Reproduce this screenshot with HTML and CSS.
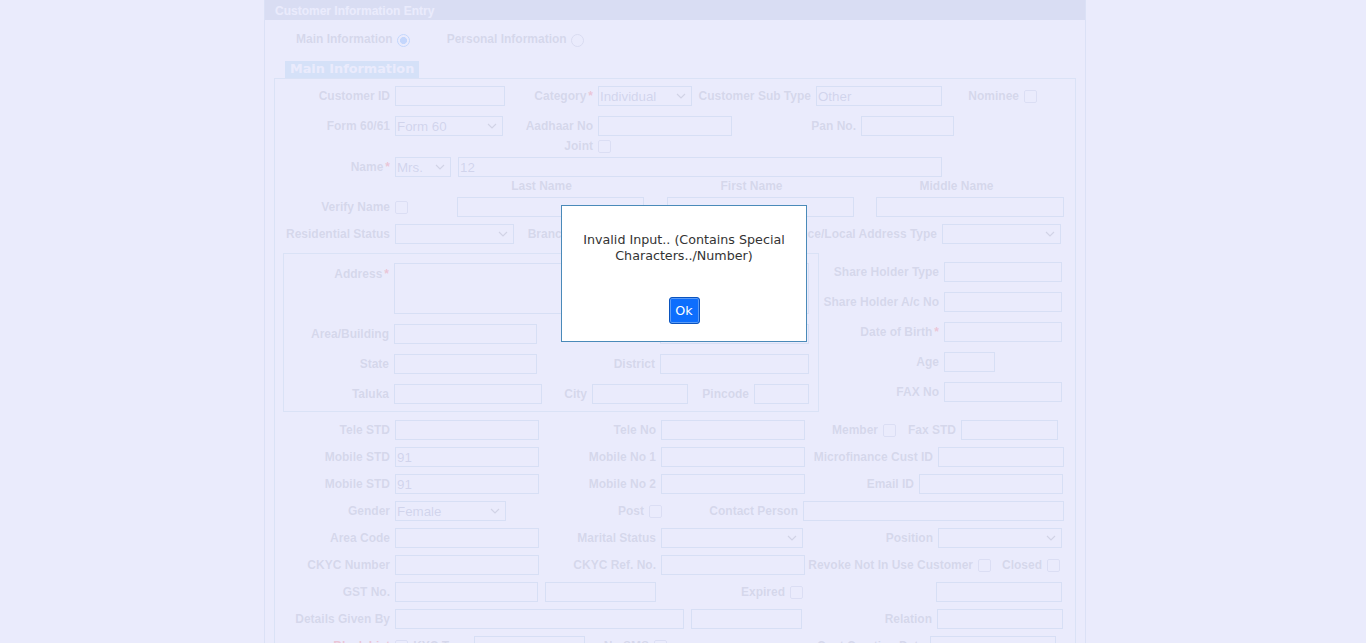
FILE: index.html
```html
<!DOCTYPE html>
<html lang="en">
<head>
<meta charset="utf-8">
<title>Customer Information Entry</title>
<link rel="stylesheet" href="styles.css">
</head>
<body>
<div class="page">
  <div class="titlebar">Customer Information Entry</div>
  <div class="tabs">
    <span class="tab">Main Information</span><span class="radio on"></span>
    <span class="tab tab2">Personal Information</span><span class="radio"></span>
  </div>
  <div class="legend">Main Information</div>
  <div class="box">
    <div class="row">
      <span class="l w115">Customer ID</span><input class="in w110" value="">
      <span class="l w88">Category<span class="req">*</span></span><div class="sel w94"><span>Individual</span><svg class="chev" width="10" height="6" viewBox="0 0 10 6"><path d="M1 1l4 4 4-4"/></svg></div>
      <span class="l w119">Customer Sub Type</span><input class="in w126" value="Other">
      <span class="l w77">Nominee</span><span class="chk"></span>
    </div>
    <div class="row">
      <span class="l w115">Form 60/61</span><div class="sel w108"><span>Form 60</span><svg class="chev" width="10" height="6" viewBox="0 0 10 6"><path d="M1 1l4 4 4-4"/></svg></div>
      <span class="l w90">Aadhaar No</span><input class="in w134" value="">
      <span class="l w124">Pan No.</span><input class="in w93" value="">
    </div>
    <div class="row r-joint">
      <span class="l w318">Joint</span><span class="chk"></span>
    </div>
    <div class="row r-name">
      <span class="l w115">Name<span class="req">*</span></span><div class="sel w56"><span>Mrs.</span><svg class="chev" width="10" height="6" viewBox="0 0 10 6"><path d="M1 1l4 4 4-4"/></svg></div>
      <input class="in w484 ml7" value="12">
    </div>
    <div class="row r-heads">
      <span class="head w187 ml183">Last Name</span>
      <span class="head w187 ml23">First Name</span>
      <span class="head head3 w188 ml22">Middle Name</span>
    </div>
    <div class="row r-verify">
      <span class="l w115">Verify Name</span><span class="chk"></span>
      <input class="in w187 ml49" value="">
      <input class="in w187 ml23" value="">
      <input class="in w188 ml22" value="">
    </div>
    <div class="row r-res">
      <span class="l w115">Residential Status</span><div class="sel w119"><span></span><svg class="chev" width="10" height="6" viewBox="0 0 10 6"><path d="M1 1l4 4 4-4"/></svg></div>
      <span class="l w55">Branch</span><div class="sel w130"><span></span><svg class="chev" width="10" height="6" viewBox="0 0 10 6"><path d="M1 1l4 4 4-4"/></svg></div>
      <span class="l w233">Residence/Local Address Type</span><div class="sel w119"><span></span><svg class="chev" width="10" height="6" viewBox="0 0 10 6"><path d="M1 1l4 4 4-4"/></svg></div>
    </div>

    <div class="addr-wrap">
      <div class="addrbox">
        <div class="arow arow-top">
          <span class="l w105 top">Address<span class="req">*</span></span><div class="ta w415"></div>
        </div>
        <div class="arow">
          <span class="l w105">Area/Building</span><input class="in w143" value="">
          <span class="l w118">Landmark</span><input class="in w149" value="">
        </div>
        <div class="arow">
          <span class="l w105">State</span><input class="in w143" value="">
          <span class="l w118">District</span><input class="in w149" value="">
        </div>
        <div class="arow">
          <span class="l w105">Taluka</span><input class="in w148" value="">
          <span class="l w45">City</span><input class="in w96" value="">
          <span class="l w61">Pincode</span><input class="in w55" value="">
        </div>
      </div>
      <div class="rcol">
        <div class="arow"><span class="l w120">Share Holder Type</span><input class="in w118" value=""></div>
        <div class="arow"><span class="l w120">Share Holder A/c No</span><input class="in w118" value=""></div>
        <div class="arow"><span class="l w120">Date of Birth<span class="req">*</span></span><input class="in w118" value=""></div>
        <div class="arow"><span class="l w120">Age</span><input class="in w51" value=""></div>
        <div class="arow"><span class="l w120">FAX No</span><input class="in w118" value=""></div>
      </div>
    </div>

    <div class="row r-tele">
      <span class="l w116">Tele STD</span><input class="in w144" value="">
      <span class="l w117">Tele No</span><input class="in w144" value="">
      <span class="l w73">Member</span><span class="chk"></span>
      <span class="l w60">Fax STD</span><input class="in w97" value="">
    </div>
    <div class="row r27">
      <span class="l w116">Mobile STD</span><input class="in w144" value="91">
      <span class="l w117">Mobile No 1</span><input class="in w144" value="">
      <span class="l w128">Microfinance Cust ID</span><input class="in w126" value="">
    </div>
    <div class="row r27">
      <span class="l w116">Mobile STD</span><input class="in w144" value="91">
      <span class="l w117">Mobile No 2</span><input class="in w144" value="">
      <span class="l w109">Email ID</span><input class="in w144" value="">
    </div>
    <div class="row r27">
      <span class="l w116">Gender</span><div class="sel w111"><span>Female</span><svg class="chev" width="10" height="6" viewBox="0 0 10 6"><path d="M1 1l4 4 4-4"/></svg></div>
      <span class="l w138">Post</span><span class="chk"></span>
      <span class="l w136">Contact Person</span><input class="in w261" value="">
    </div>
    <div class="row r27">
      <span class="l w116">Area Code</span><input class="in w144" value="">
      <span class="l w117">Marital Status</span><div class="sel w142"><span></span><svg class="chev" width="10" height="6" viewBox="0 0 10 6"><path d="M1 1l4 4 4-4"/></svg></div>
      <span class="l w130">Position</span><div class="sel w124"><span></span><svg class="chev" width="10" height="6" viewBox="0 0 10 6"><path d="M1 1l4 4 4-4"/></svg></div>
    </div>
    <div class="row r27">
      <span class="l w116">CKYC Number</span><input class="in w144" value="">
      <span class="l w117">CKYC Ref. No.</span><input class="in w144" value="">
      <span class="l w168">Revoke Not In Use Customer</span><span class="chk"></span>
      <span class="l w51">Closed</span><span class="chk"></span>
    </div>
    <div class="row r27">
      <span class="l w116">GST No.</span><input class="in w143" value="">
      <input class="in w111 ml7" value="">
      <span class="l w129">Expired</span><span class="chk"></span>
      <input class="in w126 ml133" value="">
    </div>
    <div class="row r27">
      <span class="l w116">Details Given By</span><input class="in w289" value="">
      <input class="in w111 ml7" value="">
      <span class="l w130">Relation</span><input class="in w126" value="">
    </div>
    <div class="row r27">
      <span class="l w116 red">Black List</span><span class="chk"></span>
      <span class="l w61">KYC Type</span><input class="in w111" value="">
      <span class="l w64">No SMS</span><span class="chk"></span>
      <span class="l w258">Cust Creation Date</span><input class="in w126" value="">
    </div>
  </div>
</div>

<div class="overlay"></div>
<div class="modal" role="dialog">
  <div class="msg">Invalid Input.. (Contains Special Characters../Number)</div>
  <button class="ok" type="button">Ok</button>
</div>
</body>
</html>
```

FILE: styles.css
```css
* { box-sizing: border-box; }
html, body { margin: 0; padding: 0; }
body {
  background: #ffffff;
  font-family: "Liberation Sans", Arial, sans-serif;
  font-size: 12px;
  color: #737b8c;
  height: 643px;
  overflow: hidden;
}

.page {
  margin-left: 264px;
  width: 822px;
  height: 720px;
  border-left: 1px solid #9cbcd8;
  border-right: 1px solid #9cbcd8;
}

.titlebar {
  height: 20px;
  background: #8fa4c0;
  color: #ffffff;
  font-weight: bold;
  font-size: 12px;
  line-height: 22px;
  padding-left: 10px;
}

.tabs {
  display: flex;
  align-items: center;
  height: 18px;
  margin-top: 10px;
  padding-left: 31px;
  font-weight: bold;
}
.tab2 { margin-left: 37px; }
.radio {
  width: 13px;
  height: 13px;
  margin-left: 4px;
  margin-top: 2px;
  border-radius: 50%;
  border: 1px solid #8a94b0;
  background: #ffffff;
}
.radio.on {
  border: 1px solid #0075ff;
  background: radial-gradient(circle at center, #0075ff 0 3.2px, #ffffff 3.8px);
}

.legend {
  position: relative;
  width: max-content;
  height: 17px;
  margin: 13px 0 0 20px;
  padding: 0 5px;
  background: #75b8e1;
  color: #ffffff;
  font-family: "DejaVu Sans", Verdana, sans-serif;
  font-weight: bold;
  font-size: 12.8px;
  line-height: 16px;
}

.box {
  margin-left: 9px;
  width: 802px;
  height: 640px;
  border: 1px solid #96c0d8;
  padding-top: 7px;
}

.row {
  display: flex;
  align-items: center;
  height: 20px;
  margin-top: 10px;
}
.box > .row:first-child { margin-top: 0; }
.r-joint { height: 14px; margin-top: 3px; }
.r-name { margin-top: 4px; }
.r-heads { height: 14px; margin-top: 2px; }
.r-verify { margin-top: 4px; }
.r-res { margin-top: 7px; }
.r-tele { margin-top: 8px; }
.r27 { margin-top: 7px; }

.l {
  flex: none;
  text-align: right;
  font-weight: bold;
  white-space: nowrap;
  margin-right: 5px;
  color: #737b8c;
}
.w116 { width: 115px; margin-right: 5px; }
.l.top { align-self: flex-start; padding-top: 4px; line-height: 14px; }
.l.red { color: #ff0000; }
.req { color: #ff0000; margin-left: 2px; }

.head {
  flex: none;
  text-align: center;
  font-weight: bold;
  padding-right: 20px;
  white-space: nowrap;
}
.head3 { padding-right: 29px; }

.in, .sel, .ta {
  flex: none;
  height: 20px;
  margin: 0;
  padding: 0 0 0 1px;
  border: 1px solid #7fb0d0;
  background: #ffffff;
  font-family: "Liberation Sans", Arial, sans-serif;
  font-size: 13.33px;
  color: #5a6894;
  outline: none;
}
.sel {
  display: flex;
  align-items: center;
}
.sel .chev {
  margin-left: auto;
  margin-right: 5px;
  fill: none;
  stroke: #5a5f6c;
  stroke-width: 1.2;
}
.ta { height: 51px; }

.chk {
  flex: none;
  width: 13px;
  height: 13px;
  border: 1px solid #9aa6c6;
  border-radius: 2px;
  background: #ffffff;
}

.addr-wrap {
  display: flex;
  margin-top: 9px;
  margin-left: 8px;
}
.addrbox {
  width: 536px;
  border: 1px solid #96c0d8;
  padding: 9px 0 7px 0;
}
.arow {
  display: flex;
  align-items: center;
  height: 20px;
  margin-top: 10px;
}
.arow-top { height: 51px; align-items: flex-start; }
.addrbox > .arow:first-child, .rcol > .arow:first-child { margin-top: 0; }
.rcol { padding-top: 9px; }

/* widths */
.w45 { width: 45px; } .w51 { width: 51px; } .w55 { width: 55px; } .w56 { width: 56px; }
.w60 { width: 60px; } .w61 { width: 61px; } .w64 { width: 64px; } .w73 { width: 73px; }
.w77 { width: 77px; } .w88 { width: 88px; } .w90 { width: 90px; } .w93 { width: 93px; }
.w94 { width: 94px; } .w96 { width: 96px; } .w97 { width: 97px; } .w105 { width: 105px; }
.w108 { width: 108px; } .w109 { width: 109px; } .w110 { width: 110px; } .w111 { width: 111px; }
.w115 { width: 115px; } .w117 { width: 117px; } .w118 { width: 118px; } .w119 { width: 119px; }
.w120 { width: 120px; } .w124 { width: 124px; } .w126 { width: 126px; } .w128 { width: 128px; }
.w129 { width: 129px; } .w130 { width: 130px; } .w134 { width: 134px; } .w136 { width: 136px; }
.w138 { width: 138px; } .w142 { width: 142px; } .w143 { width: 143px; } .w144 { width: 144px; }
.w148 { width: 148px; } .w149 { width: 149px; } .w168 { width: 168px; } .w187 { width: 187px; }
.w188 { width: 188px; } .w233 { width: 233px; } .w258 { width: 258px; } .w261 { width: 261px; }
.w289 { width: 289px; } .w318 { width: 318px; } .w415 { width: 415px; } .w484 { width: 484px; }
.ml7 { margin-left: 7px; } .ml22 { margin-left: 22px; } .ml23 { margin-left: 23px; }
.ml49 { margin-left: 49px; } .ml133 { margin-left: 133px; } .ml183 { margin-left: 183px; }

/* modal */
.overlay {
  position: fixed;
  left: 0; top: 0; right: 0; bottom: 0;
  background: rgba(230, 231, 252, 0.85);
}
.modal {
  position: fixed;
  left: 561px;
  top: 205px;
  width: 246px;
  height: 137px;
  background: #ffffff;
  border: 1px solid #4a8ab9;
  text-align: center;
  padding: 26px 14px 0;
  font-family: "DejaVu Sans", Verdana, sans-serif;
  font-size: 12.7px;
  line-height: 16px;
  color: #333333;
}
.ok {
  display: inline-block;
  margin-top: 33px;
  width: 31px;
  height: 27px;
  padding: 0;
  border: 1px solid #0a53be;
  border-radius: 3px;
  background: #0d6efd;
  box-shadow: inset 0 0 0 1px #5c9cf7;
  color: #ffffff;
  font-family: "DejaVu Sans", Verdana, sans-serif;
  font-size: 12.7px;
}
```
